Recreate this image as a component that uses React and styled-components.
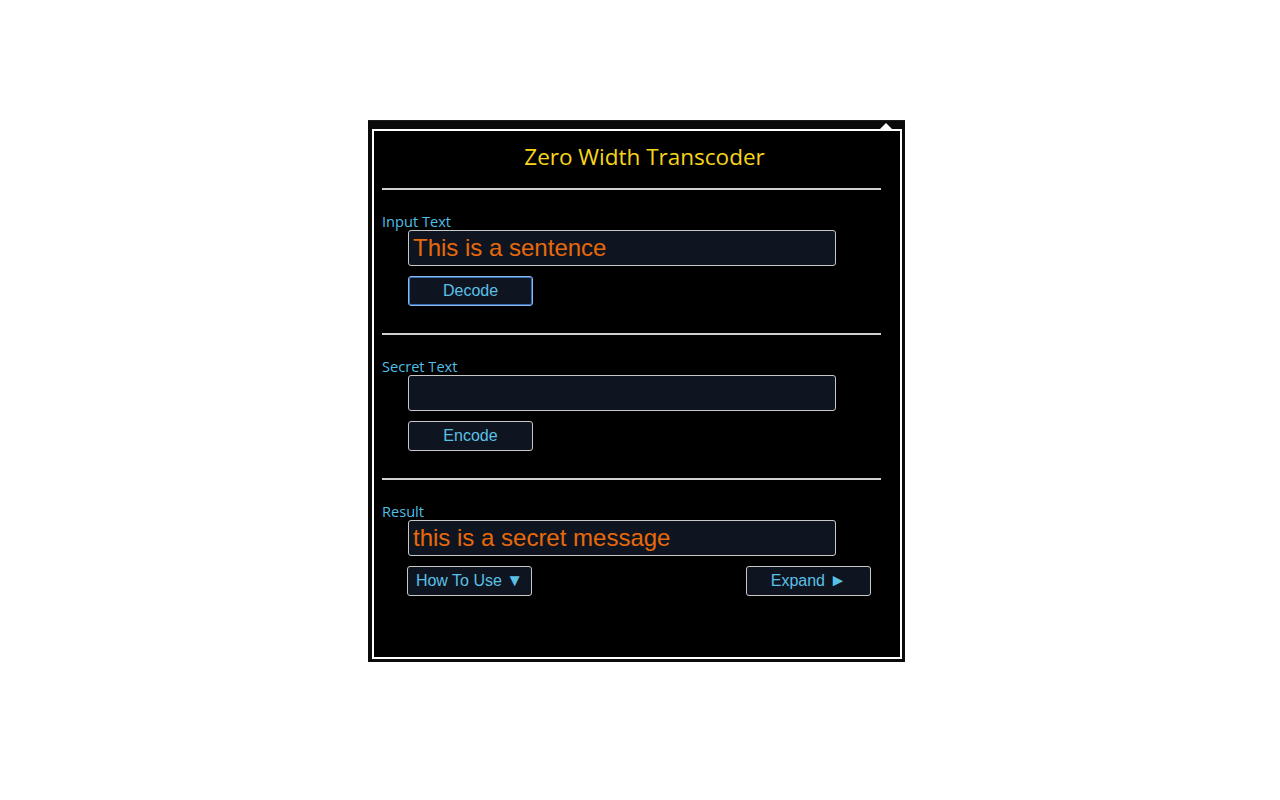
import styled, { createGlobalStyle } from 'styled-components'

const GlobalStyle = createGlobalStyle`
  html, body {
    margin: 0;
    padding: 0;
    background: #ffffff;
  }
`

const Page = styled.div`
  width: 1280px;
  height: 800px;
  padding: 120px 0 0 368px;
  box-sizing: border-box;
`

const Frame = styled.div`
  position: relative;
  width: 537px;
  height: 542px;
  background: #0b0b0b;
  border-top: 1px solid #1c1c1c;
  padding: 8px 0 0 4px;
  box-sizing: border-box;
`

const Caret = styled.div`
  position: absolute;
  top: 2px;
  right: 12px;
  width: 0;
  height: 0;
  border-left: 7px solid transparent;
  border-right: 7px solid transparent;
  border-bottom: 7px solid #ffffff;
`

const Panel = styled.div`
  width: 530px;
  height: 530px;
  box-sizing: border-box;
  border: 2px solid #ffffff;
  background: #000000;
  padding: 0 19px 0 8px;
  display: flex;
  flex-direction: column;
`

const Title = styled.h1`
  margin: 0;
  height: 57px;
  display: flex;
  align-items: center;
  justify-content: center;
  padding: 0 0 6px 26px;
  box-sizing: border-box;
  font-family: 'Open Sans', 'Noto Sans', sans-serif;
  font-weight: 400;
  font-size: 22.5px;
  color: #f6d51b;
`

const Rule = styled.hr`
  margin: 0;
  border: none;
  height: 2px;
  background: #d0d0d0;
`

const Section = styled.div`
  display: flex;
  flex-direction: column;
  padding-top: 22px;
  height: 143px;
  box-sizing: border-box;
`

const Label = styled.label`
  font-family: 'Open Sans', 'Noto Sans', sans-serif;
  font-size: 14.6px;
  line-height: 18px;
  color: #4fbfe6;
`

const Field = styled.div`
  margin-left: 26px;
  width: 428px;
  height: 36px;
  box-sizing: border-box;
  border: 1px solid #c8c8c8;
  border-radius: 3px;
  background: #0e1520;
  padding: 0 4px;
  display: flex;
  align-items: center;
  font-family: 'Liberation Sans', Arial, sans-serif;
  font-size: 24px;
  color: #e8690b;
  white-space: nowrap;
`

const ButtonRow = styled.div`
  margin-top: 10px;
  display: flex;
  justify-content: space-between;
  padding: 0 ${({ $right }) => $right || 0}px 0 ${({ $inset }) => $inset}px;
`

const Button = styled.button`
  width: 125px;
  height: 30px;
  box-sizing: border-box;
  border: 1px solid ${({ $focused }) => ($focused ? '#8ab8f0' : '#c8c8c8')};
  box-shadow: ${({ $focused }) => ($focused ? 'inset 0 0 0 1px #3a6db0' : 'none')};
  border-radius: 3px;
  background: #0e1520;
  color: #5bc0e6;
  font-family: 'Liberation Sans', Arial, sans-serif;
  font-size: 16px;
  padding: 0;
  cursor: pointer;
`

const Arrow = styled.span`
  font-size: 17px;
`

export default function App() {
  return (
    <>
      <GlobalStyle />
      <Page>
        <Frame>
          <Caret />
          <Panel>
            <Title>Zero Width Transcoder</Title>
            <Rule />
            <Section>
              <Label>Input Text</Label>
              <Field>This is a sentence</Field>
              <ButtonRow $inset={26}>
                <Button $focused>Decode</Button>
              </ButtonRow>
            </Section>
            <Rule />
            <Section>
              <Label>Secret Text</Label>
              <Field />
              <ButtonRow $inset={26}>
                <Button>Encode</Button>
              </ButtonRow>
            </Section>
            <Rule />
            <Section>
              <Label>Result</Label>
              <Field>this is a secret message</Field>
              <ButtonRow $inset={25} $right={10}>
                <Button>How To Use <Arrow>▼</Arrow></Button>
                <Button>Expand <Arrow>►</Arrow></Button>
              </ButtonRow>
            </Section>
          </Panel>
        </Frame>
      </Page>
    </>
  )
}
